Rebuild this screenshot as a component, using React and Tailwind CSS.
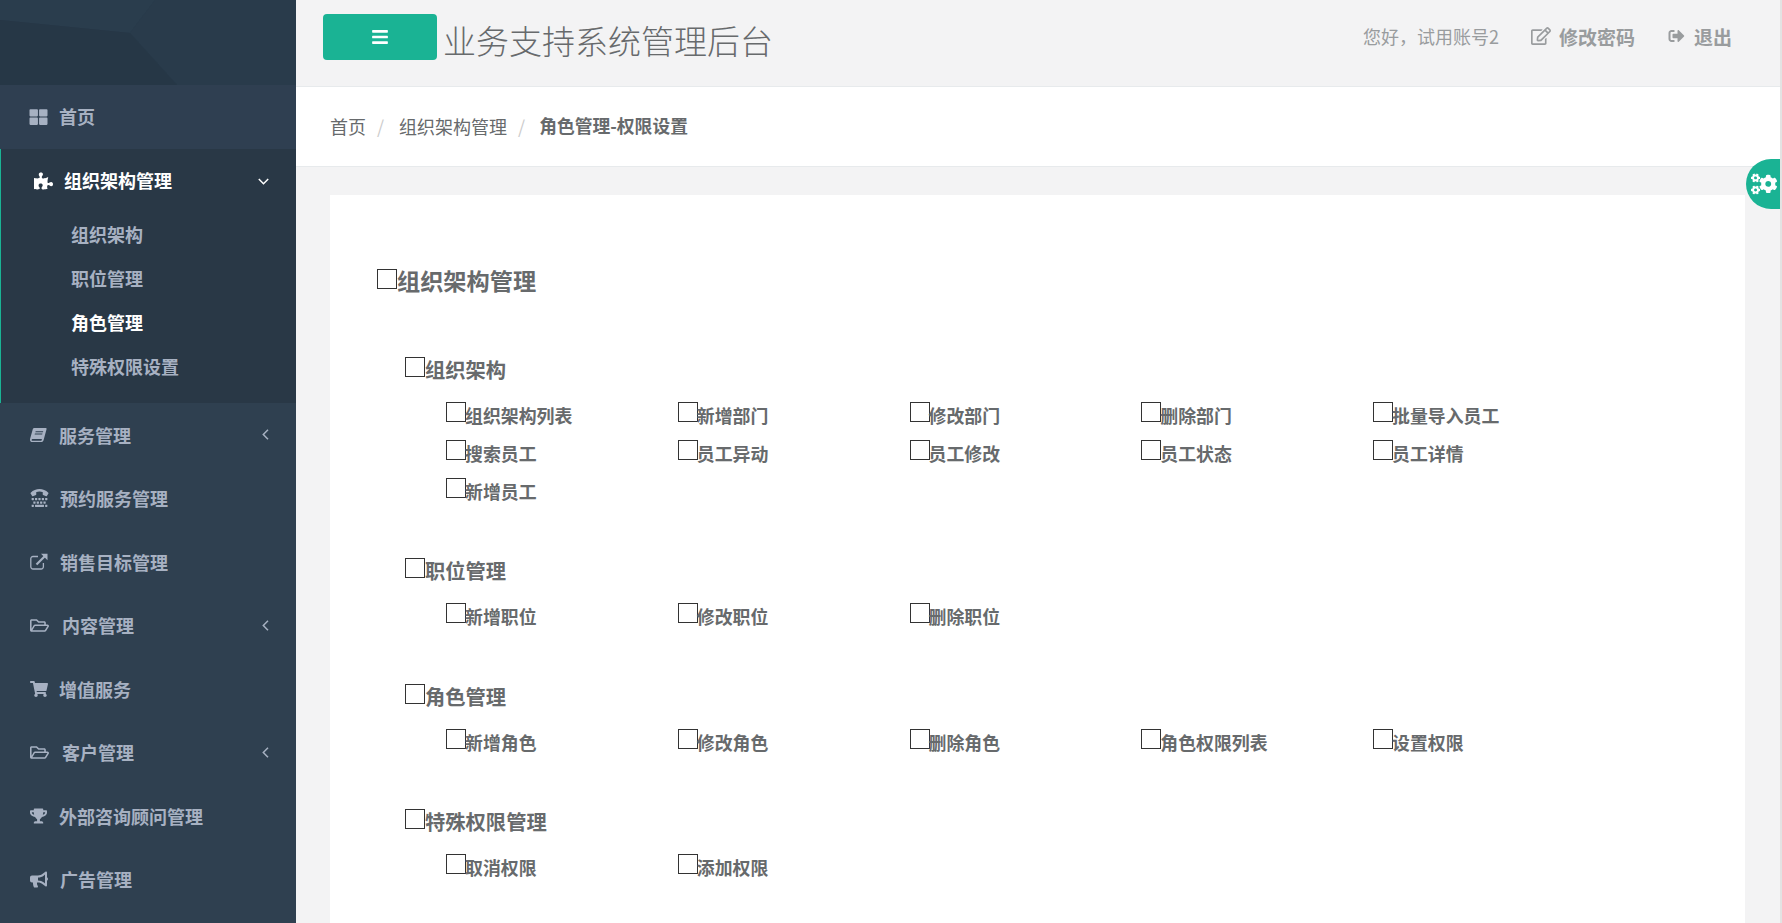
import React from "react";
import {
  FaThLarge,
  FaPuzzlePiece,
  FaTty,
  FaRegFolderOpen,
  FaShoppingCart,
  FaTrophy,
  FaBullhorn,
  FaBars,
  FaRegEdit,
  FaSignOutAlt,
  FaCogs
} from "react-icons/fa";

const font = { fontFamily: '"Noto Sans CJK SC", "Noto Sans", sans-serif' };

const SlantBook = ({ className }) => (
  <svg viewBox="0 0 18 16" className={className} fill="currentColor">
    <path d="M4.5 0.5h12c.8 0 1.2.6 1 1.3l-3 11.2c-.4 1.4-1.3 2.5-3 2.5H2.5C1 15.500 0 14.500 0 13c0-.4.1-.9.2-1.3L3 1.600C3.200.9 3.800.5 4.500.5z M6 4l-.3 1h8l.3-1z M5.200 6.500l-.3 1h8l.3-1z M2.600 12.300c-.5 0-.9.400-.9.900s.4 1 .9 1h8.600c.6 0 1-.4 1.200-1l.2-.9z" fillRule="evenodd" />
  </svg>
);

const ExternalBox = ({ className }) => (
  <svg viewBox="0 0 18 17" className={className} fill="none" stroke="currentColor">
    <path d="M8 3.500H3a2.200 2.200 0 0 0-2.200 2.200v8.100A2.200 2.200 0 0 0 3 16h8.200a2.200 2.200 0 0 0 2.200-2.200V10" strokeWidth="1.300" />
    <path d="M6.500 11.500 15 3" strokeWidth="2.200" />
    <path d="M11 .8h6.500v6.500z" fill="currentColor" stroke="none" />
  </svg>
);

const ThinLeft = () => (
  <svg viewBox="0 0 7 11" className="w-[7px] h-[11px]" fill="none" stroke="currentColor" strokeWidth="1.500">
    <path d="M6 .8 1.300 5.500 6 10.200" />
  </svg>
);

const ThinDown = () => (
  <svg viewBox="0 0 11 7" className="w-[11px] h-[7px]" fill="none" stroke="currentColor" strokeWidth="1.500">
    <path d="M.8 1 5.500 5.700 10.200 1" />
  </svg>
);

const navItems = [
  { label: "服务管理", Icon: SlantBook, iconClass: "w-[17px] h-[16px]", textClass: "ml-[9px]", arrow: true },
  { label: "预约服务管理", Icon: FaTty, iconClass: "w-[19px] h-[18px]", textClass: "ml-[10px]" },
  { label: "销售目标管理", Icon: ExternalBox, iconClass: "w-[18px] h-[17px]", textClass: "ml-[10px]" },
  { label: "内容管理", Icon: FaRegFolderOpen, iconClass: "w-[19px] h-[17px]", textClass: "ml-[12px]", arrow: true },
  { label: "增值服务", Icon: FaShoppingCart, iconClass: "w-[18px] h-[16px]", textClass: "ml-[9px]" },
  { label: "客户管理", Icon: FaRegFolderOpen, iconClass: "w-[19px] h-[17px]", textClass: "ml-[12px]", arrow: true },
  { label: "外部咨询顾问管理", Icon: FaTrophy, iconClass: "w-[17px] h-[16px]", textClass: "ml-[9px]" },
  { label: "广告管理", Icon: FaBullhorn, iconClass: "w-[18px] h-[17px]", textClass: "ml-[10px]" }
];

const sections = [
  { title: "组织架构", items: ["组织架构列表", "新增部门", "修改部门", "删除部门", "批量导入员工", "搜索员工", "员工异动", "员工修改", "员工状态", "员工详情", "新增员工"] },
  { title: "职位管理", items: ["新增职位", "修改职位", "删除职位"] },
  { title: "角色管理", items: ["新增角色", "修改角色", "删除角色", "角色权限列表", "设置权限"] },
  { title: "特殊权限管理", items: ["取消权限", "添加权限"] }
];

function Check() {
  return (
    <input
      type="checkbox"
      className="appearance-none block shrink-0 w-5 h-5 m-0 bg-white border border-[#333333] rounded-none"
    />
  );
}

function Sidebar() {
  return (
    <aside className="w-[296px] shrink-0 h-full bg-[#2f4050] text-[#a7b1c2] text-[18px] font-bold overflow-hidden">
      <div className="h-[85px] bg-[#283b4b]">
        <svg viewBox="0 0 296 85" className="w-full h-full block">
          <polygon points="0,0 155,0 130,33 0,20" fill="#2a3d4d" />
          <polygon points="155,0 296,0 296,85 177,85 130,33" fill="#293b4b" />
          <polygon points="0,20 130,33 177,85 0,85" fill="#263746" />
        </svg>
      </div>
      <div className="h-[64px] flex items-center pl-[29px] bg-[#2f3f51]">
        <FaThLarge className="w-[19px] h-[18px]" />
        <span className="ml-[11px] pb-[2px] leading-none">首页</span>
      </div>
      <div className="h-[254px] bg-[#293846] border-l border-[#1ab394]">
        <div className="h-[64px] flex items-center pl-[33px] pr-[27px] text-white">
          <FaPuzzlePiece className="w-[19px] h-[18px]" />
          <span className="ml-[11px] pb-[2px] leading-none flex-1">组织架构管理</span>
          <ThinDown />
        </div>
        {["组织架构", "职位管理", "角色管理", "特殊权限设置"].map((name) => (
          <div
            key={name}
            className={`h-[44px] flex items-center pl-[70px] pb-[2px] leading-none ${name === "角色管理" ? "text-white" : ""}`}
          >
            {name}
          </div>
        ))}
      </div>
      {navItems.map(({ label, Icon, iconClass, textClass, arrow }) => (
        <div key={label} className="h-[63.5px] flex items-center pl-[30px] pr-[27px]">
          <div className="w-[20px] shrink-0">
            <Icon className={iconClass} />
          </div>
          <span className={`leading-none flex-1 whitespace-nowrap ${textClass}`}>{label}</span>
          {arrow && <ThinLeft />}
        </div>
      ))}
    </aside>
  );
}

function Header() {
  return (
    <header className="h-[87px] shrink-0 flex items-start border-b border-[#e7eaec] pl-[27px]">
      <button className="mt-[14px] w-[114px] h-[46px] rounded-[4px] bg-[#1ab394] text-white flex items-center justify-center">
        <FaBars className="w-[18px] h-[18px]" />
      </button>
      <h1 className="ml-[6px] mt-[13px] text-[33px] leading-[54px] font-light text-[#676a6c] whitespace-nowrap">
        业务支持系统管理后台
      </h1>
      <div className="ml-auto mr-[48px] h-[72px] flex items-center text-[#999c9e] text-[18px] leading-none">
        <span>{"您好\uFF0C试用账号2"}</span>
        <FaRegEdit className="ml-[32px] w-[20px] h-[18px]" />
        <span className="ml-[8px] text-[19px] font-bold">修改密码</span>
        <FaSignOutAlt className="ml-[33px] w-[17px] h-[16px]" />
        <span className="ml-[9px] text-[19px] font-bold">退出</span>
      </div>
    </header>
  );
}

function Breadcrumb() {
  return (
    <div className="h-[80px] shrink-0 bg-white border-b border-[#e7eaec] flex items-center pl-[34px] pb-[1px] text-[18px] leading-none text-[#676a6c]">
      <span>首页</span>
      <span className="ml-[11px] text-[#cccccc]">/</span>
      <span className="ml-[15px]">组织架构管理</span>
      <span className="ml-[11px] text-[#cccccc]">/</span>
      <span className="ml-[14px] text-[17.8px] font-bold">角色管理-权限设置</span>
    </div>
  );
}

function PermissionSection({ title, items }) {
  return (
    <section className="mb-[42.3px]">
      <div className="flex items-start h-[45px]">
        <Check />
        <span className="text-[20.3px] leading-[25px] font-bold">{title}</span>
      </div>
      <div className="ml-[41px] grid grid-cols-[repeat(5,231.75px)] auto-rows-[38px]">
        {items.map((item) => (
          <div key={item} className="flex items-start">
            <Check />
            <span className="-ml-px text-[17.9px] leading-[27.6px] font-bold whitespace-nowrap">{item}</span>
          </div>
        ))}
      </div>
    </section>
  );
}

export default function App() {
  return (
    <div className="relative w-full h-[923px] overflow-hidden flex bg-[#f3f3f4]" style={font}>
      <Sidebar />
      <main className="flex-1 min-w-0 h-full flex flex-col border-r-2 border-[#e3e3e3]">
        <Header />
        <Breadcrumb />
        <div className="flex-1 pt-[28px] pl-[34px] pr-[35px] overflow-hidden">
          <div className="bg-white h-full pt-[74px] pl-[47px] text-[#676a6c]">
            <div className="flex items-start h-[88px]">
              <Check />
              <span className="text-[23.2px] leading-[22px] font-bold">组织架构管理</span>
            </div>
            <div className="ml-[28px]">
              {sections.map((s) => (
                <PermissionSection key={s.title} title={s.title} items={s.items} />
              ))}
            </div>
          </div>
        </div>
      </main>
      <div className="absolute left-[1746px] top-[159px] w-[34px] h-[50px] rounded-l-full bg-[#1ab394] text-white flex items-center justify-center">
        <FaCogs className="w-[26px] h-[24px] ml-[2px] -scale-x-100" />
      </div>
    </div>
  );
}
